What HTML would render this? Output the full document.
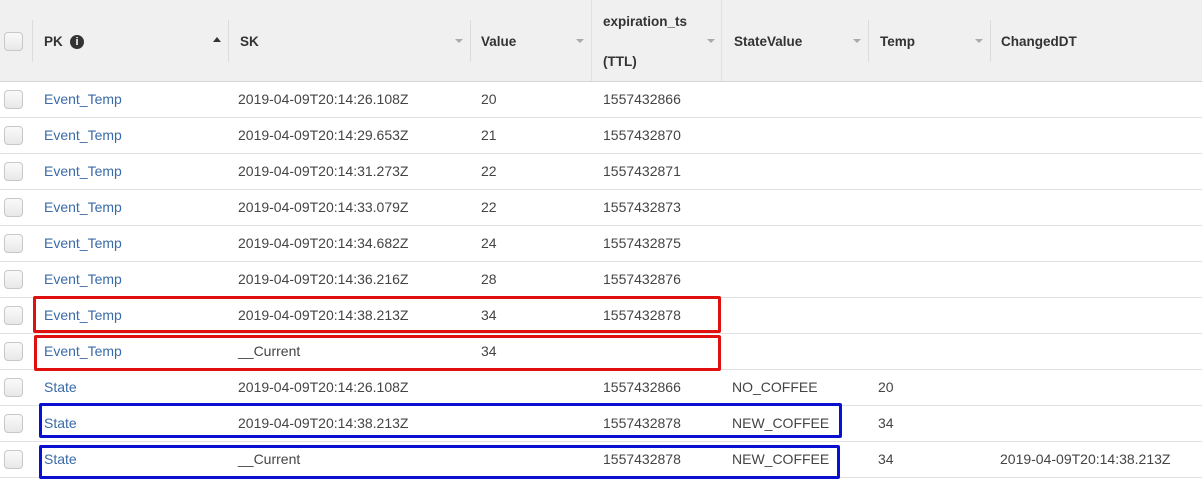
<!DOCTYPE html>
<html><head><style>
body{margin:0;width:1202px;height:483px;background:#fff;font-family:"Liberation Sans",Arial,sans-serif;font-size:14px;color:#444;position:relative;overflow:hidden}
.hdr{position:absolute;left:0;top:0;width:1202px;height:81px;background:#f0f0f0;border-bottom:1px solid #d5d5d5}
.sep{position:absolute;top:20px;width:1px;height:42px;background:#dcdcdc}
.h{position:absolute;font-weight:bold;color:#333;font-size:13.5px}
.arr{position:absolute;top:39px;width:0;height:0;border-left:4px solid transparent;border-right:4px solid transparent;border-top:4px solid #aaa}
.row{position:absolute;left:0;width:1202px;height:36px;border-bottom:1px solid #e2e2e2}
.row span{position:absolute;top:10px}
.cb{position:absolute;left:4px;width:17px;height:17px;border:1px solid #c8c8c8;border-radius:4px;background:linear-gradient(#fafafa,#e8e8e8)}
.pk{color:#3a6aa8}
.box{position:absolute;border:3px solid;border-radius:2px}
</style></head><body>
<div class="hdr">
<div class="cb" style="top:32px"></div>
<div class="sep" style="left:32px"></div>
<div class="h" style="left:44px;top:34px">PK</div>
<div style="position:absolute;left:70px;top:35px;width:14px;height:14px;border-radius:50%;background:#333;color:#fff;font-size:11px;font-weight:bold;text-align:center;line-height:14px">i</div>
<div style="position:absolute;left:213px;top:37px;border-left:4px solid transparent;border-right:4px solid transparent;border-bottom:5px solid #333"></div>
<div class="sep" style="left:228px"></div>
<div class="h" style="left:240px;top:34px">SK</div><div class="arr" style="left:455px"></div>
<div class="sep" style="left:470px"></div>
<div class="h" style="left:481px;top:34px">Value</div><div class="arr" style="left:576px"></div>
<div class="sep" style="left:591px;top:0;height:81px;background:#e0e0e0"></div>
<div class="h" style="left:603px;top:14px">expiration_ts</div><div class="h" style="left:603px;top:54px">(TTL)</div><div class="arr" style="left:707px"></div>
<div class="sep" style="left:721px;top:0;height:81px;background:#e0e0e0"></div>
<div class="h" style="left:734px;top:34px">StateValue</div><div class="arr" style="left:853px"></div>
<div class="sep" style="left:868px"></div>
<div class="h" style="left:880px;top:34px">Temp</div><div class="arr" style="left:975px"></div>
<div class="sep" style="left:990px"></div>
<div class="h" style="left:1001px;top:34px">ChangedDT</div>
</div>

<div class="row" style="top:81px"><div class="cb" style="top:9px"></div><span class="pk" style="left:44px">Event_Temp</span><span style="left:238px">2019-04-09T20:14:26.108Z</span><span style="left:481px">20</span><span style="left:603px">1557432866</span></div>
<div class="row" style="top:117px"><div class="cb" style="top:9px"></div><span class="pk" style="left:44px">Event_Temp</span><span style="left:238px">2019-04-09T20:14:29.653Z</span><span style="left:481px">21</span><span style="left:603px">1557432870</span></div>
<div class="row" style="top:153px"><div class="cb" style="top:9px"></div><span class="pk" style="left:44px">Event_Temp</span><span style="left:238px">2019-04-09T20:14:31.273Z</span><span style="left:481px">22</span><span style="left:603px">1557432871</span></div>
<div class="row" style="top:189px"><div class="cb" style="top:9px"></div><span class="pk" style="left:44px">Event_Temp</span><span style="left:238px">2019-04-09T20:14:33.079Z</span><span style="left:481px">22</span><span style="left:603px">1557432873</span></div>
<div class="row" style="top:225px"><div class="cb" style="top:9px"></div><span class="pk" style="left:44px">Event_Temp</span><span style="left:238px">2019-04-09T20:14:34.682Z</span><span style="left:481px">24</span><span style="left:603px">1557432875</span></div>
<div class="row" style="top:261px"><div class="cb" style="top:9px"></div><span class="pk" style="left:44px">Event_Temp</span><span style="left:238px">2019-04-09T20:14:36.216Z</span><span style="left:481px">28</span><span style="left:603px">1557432876</span></div>
<div class="row" style="top:297px"><div class="cb" style="top:9px"></div><span class="pk" style="left:44px">Event_Temp</span><span style="left:238px">2019-04-09T20:14:38.213Z</span><span style="left:481px">34</span><span style="left:603px">1557432878</span></div>
<div class="row" style="top:333px"><div class="cb" style="top:9px"></div><span class="pk" style="left:44px">Event_Temp</span><span style="left:238px">__Current</span><span style="left:481px">34</span></div>
<div class="row" style="top:369px"><div class="cb" style="top:9px"></div><span class="pk" style="left:44px">State</span><span style="left:238px">2019-04-09T20:14:26.108Z</span><span style="left:603px">1557432866</span><span style="left:732px">NO_COFFEE</span><span style="left:878px">20</span></div>
<div class="row" style="top:405px"><div class="cb" style="top:9px"></div><span class="pk" style="left:44px">State</span><span style="left:238px">2019-04-09T20:14:38.213Z</span><span style="left:603px">1557432878</span><span style="left:732px">NEW_COFFEE</span><span style="left:878px">34</span></div>
<div class="row" style="top:441px"><div class="cb" style="top:9px"></div><span class="pk" style="left:44px">State</span><span style="left:238px">__Current</span><span style="left:603px">1557432878</span><span style="left:732px">NEW_COFFEE</span><span style="left:878px">34</span><span style="left:1000px">2019-04-09T20:14:38.213Z</span></div>

<div class="box" style="left:33px;top:296px;width:682px;height:31px;border-color:#e01010"></div>
<div class="box" style="left:34px;top:335px;width:681px;height:30px;border-color:#e01010"></div>
<div class="box" style="left:39px;top:403px;width:797px;height:29px;border-color:#0a10d0"></div>
<div class="box" style="left:39px;top:445px;width:795px;height:28px;border-color:#0a10d0"></div>
</body></html>
